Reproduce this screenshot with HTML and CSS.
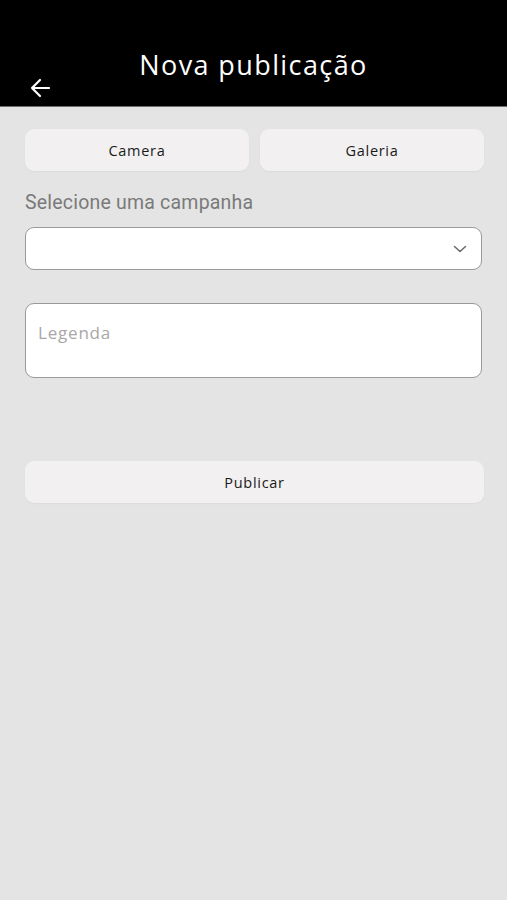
FILE: index.html
```html
<!DOCTYPE html>
<html lang="pt">
<head>
<meta charset="utf-8">
<link rel="stylesheet" href="styles.css">
</head>
<body>
<header class="topbar">
  <button class="back" aria-label="Voltar">
    <svg width="22" height="20" viewBox="0 0 22 20"><path d="M20 10H3M11 2L3 10l8 8" fill="none" stroke="#fff" stroke-width="2.2" stroke-linecap="round" stroke-linejoin="round"/></svg>
  </button>
  <h1 class="title">Nova publicação</h1>
</header>
<main class="content">
  <div class="source-row">
    <button class="btn">Camera</button>
    <button class="btn">Galeria</button>
  </div>
  <label class="label">Selecione uma campanha</label>
  <div class="select">
    <svg class="chev" width="14" height="8" viewBox="0 0 14 8"><path d="M1.5 1.5L7 6.5l5.5-5" fill="none" stroke="#6b6b70" stroke-width="1.6" stroke-linecap="round" stroke-linejoin="round"/></svg>
  </div>
  <div class="caption">Legenda</div>
  <button class="btn publish">Publicar</button>
</main>
</body>
</html>
```
FILE: styles.css
```css
* { box-sizing: border-box; }
html, body { margin: 0; padding: 0; }
body {
  background: #e4e4e4;
  width: 507px;
  height: 900px;
  font-family: "Open Sans", sans-serif;
}
.topbar {
  background: #000;
  height: 107px;
  border-bottom: 1px solid #6e6e6e;
  display: flex;
  align-items: flex-end;
  position: relative;
  padding: 0 0 8px 29px;
}
.back {
  background: none;
  border: 0;
  padding: 0;
  display: flex;
  margin-bottom: 0;
}
.title {
  margin: 0;
  color: #fff;
  font-weight: 400;
  font-size: 27px;
  letter-spacing: 1.4px;
  font-family: "Open Sans", sans-serif;
  position: absolute;
  left: 0;
  right: 0;
  top: 47px;
  text-align: center;
  line-height: 36px;
}
.content {
  padding: 22px 23px 0 25px;
  display: flex;
  flex-direction: column;
}
.source-row {
  display: flex;
  gap: 11px;
}
.btn {
  flex: 1;
  height: 42px;
  border: 0;
  border-radius: 9px;
  background: #f2f0f1;
  box-shadow: 0 1px 2px rgba(0,0,0,0.04);
  font-family: "Open Sans", sans-serif;
  font-size: 14.5px;
  font-weight: 500;
  color: #1a1a1a;
  letter-spacing: 0.7px;
  padding: 0;
}
.label {
  margin-top: 20px;
  font-family: "Roboto", sans-serif;
  font-size: 19.5px;
  color: #7a7a7a;
  line-height: 24px;
  letter-spacing: 0.2px;
}
.select {
  margin-top: 12px;
  margin-right: 2px;
  height: 43px;
  background: #fff;
  border: 1px solid #9a9a9a;
  border-radius: 9px;
  display: flex;
  align-items: center;
  justify-content: flex-end;
  padding-right: 14px;
}
.caption {
  margin-top: 33px;
  margin-right: 2px;
  height: 75px;
  background: #fff;
  border: 1px solid #9a9a9a;
  border-radius: 9px;
  padding: 18px 12px 0;
  font-size: 17px;
  color: #a8a8a8;
  letter-spacing: 0.8px;
  line-height: 22px;
}
.publish {
  flex: none;
  margin-top: 83px;
  height: 42px;
  width: 459px;
}
```
